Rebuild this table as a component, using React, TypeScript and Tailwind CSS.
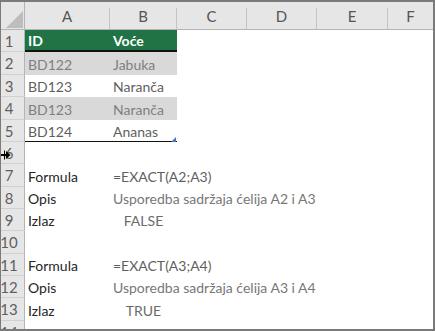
import React from "react";

const font = { fontFamily: "Lato, 'Open Sans', sans-serif" };

const heights = [22, 23, 22, 23, 22, 22, 23, 22, 22, 23, 22, 22, 23];

type Cell = { a?: string; b?: string; aCls?: string; bCls?: string; bCenter?: boolean; rowCls?: string };

const rows: Cell[] = [
  { a: "ID", b: "Voće", aCls: "text-white font-bold", bCls: "text-white font-bold", rowCls: "bg-[#217346] border-b-2 border-[#111]" },
  { a: "BD122", b: "Jabuka", aCls: "text-[#808080]", bCls: "text-[#808080]", rowCls: "bg-[#d9d9d9]" },
  { a: "BD123", b: "Naranča", aCls: "text-[#5f5f5f]", bCls: "text-[#5f5f5f]", rowCls: "bg-white" },
  { a: "BD123", b: "Naranča", aCls: "text-[#808080]", bCls: "text-[#808080]", rowCls: "bg-[#d9d9d9]" },
  { a: "BD124", b: "Ananas", aCls: "text-[#5f5f5f]", bCls: "text-[#5f5f5f]", rowCls: "bg-white border-b border-[#111]" },
  {},
  { a: "Formula", b: "=EXACT(A2;A3)", aCls: "text-[#262626]", bCls: "text-[#5f5f5f]" },
  { a: "Opis", b: "Usporedba sadržaja ćelija A2 i A3", aCls: "text-[#262626]", bCls: "text-[#777777]" },
  { a: "Izlaz", b: "FALSE", aCls: "text-[#262626]", bCls: "text-[#6b6b6b]", bCenter: true },
  {},
  { a: "Formula", b: "=EXACT(A3;A4)", aCls: "text-[#262626]", bCls: "text-[#5f5f5f]" },
  { a: "Opis", b: "Usporedba sadržaja ćelija A3 i A4", aCls: "text-[#262626]", bCls: "text-[#777777]" },
  { a: "Izlaz", b: "TRUE", aCls: "text-[#262626]", bCls: "text-[#6b6b6b]", bCenter: true },
];

const cols = [
  { l: "A", w: "w-[85px]" },
  { l: "B", w: "w-[67px]" },
  { l: "C", w: "w-[70px]" },
  { l: "D", w: "w-[70px]" },
  { l: "E", w: "w-[71px]" },
];

export default function App() {
  return (
    <div
      className="relative w-[435px] h-[331px] bg-white border-t-2 border-r-2 border-b-2 border-l border-[#7a7a7a] overflow-hidden flex flex-col text-[14px] leading-none"
      style={font}
    >
      {/* column header */}
      <div className="flex h-[28px] shrink-0 bg-[#e6e6e6] border-b border-[#b4b4b4]">
        <div className="w-[24px] shrink-0 border-r border-[#b4b4b4] flex items-end justify-end pr-[1px] pb-[1px]">
          <svg width="17" height="17" viewBox="0 0 17 17">
            <polygon points="17,0 17,17 0,17" fill="#bdbdbd" />
          </svg>
        </div>
        {cols.map((c) => (
          <div key={c.l} className={`${c.w} shrink-0 flex relative`}>
            <div className="flex-1 flex items-center justify-center text-[#555555] pt-[1px] text-[15px]">{c.l}</div>
            <div className="w-px mt-[6px] bg-[#c4c4c4]" />
          </div>
        ))}
        <div className="flex-1 flex items-center justify-center text-[#555555] pt-[1px] text-[15px]">F</div>
      </div>

      {/* body rows */}
      {rows.map((r, i) => (
        <div key={i} className="flex shrink-0" style={{ height: heights[i] }}>
          <div className="w-[24px] shrink-0 bg-[#e6e6e6] border-r border-b border-r-[#b4b4b4] border-b-[#d0d0d0] flex items-center text-[#5f5f5f] text-[15px]">
            <div className="w-[16px] flex justify-center pt-[1px]">{i + 1}</div>
          </div>
          <div className={`w-[152px] shrink-0 flex relative ${r.rowCls ?? ""}`}>
            <div className={`w-[85px] shrink-0 flex items-center pl-[3px] pt-[2px] ${r.aCls ?? ""}`}>{r.a}</div>
            <div
              className={`w-[67px] shrink-0 flex items-center pt-[2px] whitespace-nowrap ${r.bCenter ? "justify-center" : "pl-[3px]"} ${r.bCls ?? ""}`}
            >
              {r.b}
            </div>
            {i === 4 && (
              <svg className="absolute right-[1px] bottom-[-1px]" width="5" height="5" viewBox="0 0 5 5">
                <polygon points="5,0 5,5 0,5" fill="#4472c4" />
              </svg>
            )}
          </div>
          <div className="flex-1" />
        </div>
      ))}
      <div className="flex flex-1">
        <div className="w-[24px] shrink-0 bg-[#e6e6e6] border-r border-[#b4b4b4] overflow-hidden text-[#5f5f5f] text-[15px]">
          <div className="w-[16px] flex justify-center pt-[4px]">14</div>
        </div>
        <div className="flex-1" />
      </div>

      {/* resize cursor */}
      <svg className="absolute left-0 top-[148px]" width="10" height="10" viewBox="0 0 10 10">
        <rect x="0" y="4" width="6" height="2" fill="#000" />
        <polygon points="5,1 9.5,5 5,9" fill="#000" />
        <rect x="3" y="0.5" width="1" height="9" fill="#000" />
      </svg>
    </div>
  );
}
